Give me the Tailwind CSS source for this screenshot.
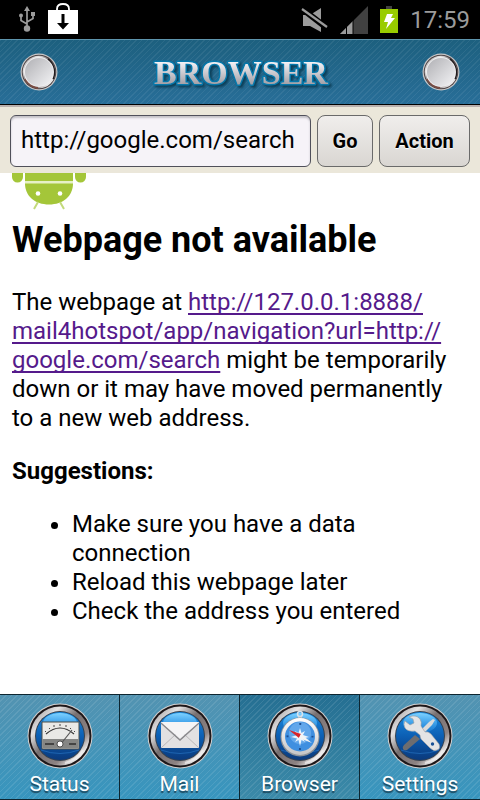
<!DOCTYPE html>
<html lang="en">
<head>
  <meta charset="UTF-8" />
  <meta name="viewport" content="width=device-width, initial-scale=1.0"/>
  <title>Browser</title>
  <script src="https://cdn.jsdelivr.net/npm/@tailwindcss/browser@4"></script>
</head>
<body class="bg-white text-black font-[Roboto,sans-serif]">
  <!-- shared gradients and the glossy tab disc -->
  <svg class="absolute" width="0" height="0" aria-hidden="true">
    <defs>
      <linearGradient id="rim" x1="0" y1="0" x2="1" y2="1">
        <stop offset="0" stop-color="#8a8688"/><stop offset=".25" stop-color="#e4e2e2"/>
        <stop offset=".45" stop-color="#777071"/><stop offset=".7" stop-color="#8d8383"/>
        <stop offset=".84" stop-color="#efeded"/><stop offset="1" stop-color="#6b6264"/>
      </linearGradient>
      <linearGradient id="disc" x1="0" y1="0" x2="0" y2="1">
        <stop offset="0" stop-color="#1a8be0"/><stop offset=".5" stop-color="#0c5fb4"/>
        <stop offset=".8" stop-color="#0a4791"/><stop offset="1" stop-color="#0b3a7c"/>
      </linearGradient>
      <linearGradient id="gloss" x1="0" y1="0" x2="0" y2="1">
        <stop offset="0" stop-color="#7fd2ff"/><stop offset="1" stop-color="#2f9bf0" stop-opacity=".3"/>
      </linearGradient>
      <linearGradient id="knob" x1="0" y1="0" x2="1" y2="1">
        <stop offset="0" stop-color="#b0b0b4"/><stop offset="1" stop-color="#f4f4f6"/>
      </linearGradient>
      <linearGradient id="metal" x1="0" y1="0" x2="0" y2="1">
        <stop offset="0" stop-color="#ffffff"/><stop offset="1" stop-color="#c4c4c6"/>
      </linearGradient>
      <linearGradient id="letters" x1="0" y1="0" x2="0" y2="1">
        <stop offset="0.2" stop-color="#f6f4f8"/><stop offset="0.9" stop-color="#98959c"/>
      </linearGradient>
      <symbol id="badge" viewBox="0 0 66 66">
        <circle cx="33" cy="33" r="32.5" fill="#d2d0d0"/>
        <circle cx="33" cy="33" r="31.5" fill="#1d1719"/>
        <circle cx="33" cy="33" r="29.5" fill="url(#rim)"/>
        <circle cx="33" cy="33" r="25" fill="#35414f"/>
        <circle cx="33" cy="33" r="24" fill="url(#disc)"/>
        <ellipse cx="33" cy="20" rx="17" ry="10" fill="url(#gloss)"/>
        <path d="M14 47Q33 54 52 47" fill="none" stroke="#2a79c9" stroke-width="1" opacity=".6"/>
        <path d="M38 60Q50 57 56 47" fill="none" stroke="#f7f5f5" stroke-width="2" opacity=".6"/>
      </symbol>
      <symbol id="round" viewBox="0 0 38 38">
        <circle cx="19" cy="19" r="18.5" fill="#c9c8c9"/>
        <circle cx="19" cy="19" r="17.3" fill="#4a4143"/>
        <circle cx="19" cy="19" r="16.3" fill="url(#rim)"/>
        <path d="M28 6Q37 15 33 26" fill="none" stroke="#221c1e" stroke-width="2"/>
        <path d="M5 26Q10 34 18 35" fill="none" stroke="#7b4c42" stroke-width="2"/>
        <circle cx="19" cy="19" r="15" fill="#eeeef0"/>
        <circle cx="19" cy="19" r="14" fill="url(#knob)"/>
      </symbol>
    </defs>
  </svg>

  <div class="flex flex-col min-h-screen">
    <!-- Status bar -->
    <div class="h-[39px] bg-black flex items-center justify-between pl-[18px] pr-[10px] text-[#9b9b9b]">
      <div class="flex items-start gap-3">
        <svg class="w-[18px] h-[26px] mt-1" viewBox="0 0 18 26" fill="none" stroke="#9b9b9b" stroke-width="1.7">
          <path d="M9 22V3M9 18L3 14.5V10M9 16L15 12.5V8"/>
          <path d="M9 0L12 5H6Z" fill="#9b9b9b" stroke="none"/>
          <circle cx="9" cy="22.5" r="3.2" fill="#9b9b9b" stroke="none"/>
          <circle cx="3" cy="9.5" r="2" fill="#9b9b9b" stroke="none"/>
          <path d="M13 6H17V10H13Z" fill="#9b9b9b" stroke="none"/>
        </svg>
        <svg class="w-[30px] h-[36px]" viewBox="0 0 30 36">
          <path d="M9 9V7Q9 2 15 2T21 7V9" fill="none" stroke="#fff" stroke-width="1.8"/>
          <path d="M0 8H30V32H0Z" fill="#fff"/>
          <path d="M13.5 12H16.5V21H21L15 27.5L9 21H13.5Z" fill="#000"/>
        </svg>
      </div>
      <div class="flex items-center">
        <svg class="w-[27px] h-[26px]" viewBox="0 0 27 26">
          <path d="M2 8H9L20 1V25L9 19H2Z" fill="#9b9b9b"/>
          <path d="M0 1L26 21" stroke="#000" stroke-width="6"/>
          <path d="M1 2L26 20" stroke="#9b9b9b" stroke-width="2.2"/>
        </svg>
        <svg class="w-[28px] h-[28px] ml-3" viewBox="0 0 28 28">
          <path d="M0 28L28 0V28Z" fill="#414141"/>
          <path d="M0 28L13 15V28Z" fill="#9b9b9b"/>
          <path d="M6.5 18V28M13 12V28" stroke="#000" stroke-width="1"/>
        </svg>
        <svg class="w-[18px] h-[27px] ml-3" viewBox="0 0 18 27">
          <path d="M6 0H12V3H6Z" fill="#414141"/>
          <path d="M0 3H18V27H0Z" fill="#99cc00"/>
          <path d="M7 8H13L11 12H15L6 23L8 16H4Z" fill="#fff"/>
        </svg>
        <span class="text-2xl ml-3">17:59</span>
      </div>
    </div>

    <!-- Title bar -->
    <header class="h-[66px] flex items-center justify-between px-5 border-t border-t-[#5d94ad] border-b border-b-black bg-[repeating-linear-gradient(135deg,#ffffff10_0px,#ffffff10_1px,transparent_1px,transparent_4px),linear-gradient(#1d607f,#286e98)]">
      <button aria-label="Back"><svg class="w-[38px] h-[38px]"><use href="#round"/></svg></button>
      <h1>
        <svg class="w-[184px] h-[44px] drop-shadow-[2px_2px_1px_#0d3f58]" viewBox="0 0 184 44" font-family="Liberation Serif, serif" font-weight="700" font-size="34" text-anchor="middle" stroke-linejoin="round">
          <text x="93" y="34" fill="url(#letters)" stroke="#0678ab" stroke-width="3" paint-order="stroke">BROWSER</text>
        </svg>
      </h1>
      <button aria-label="Menu"><svg class="w-[38px] h-[38px]"><use href="#round"/></svg></button>
    </header>

    <!-- Address form -->
    <form class="h-[68px] flex items-center gap-[6px] px-[10px] pt-px bg-[#ebe7da] border-t-2 border-t-[#b9b0ad]">
      <input type="text" aria-label="Address" value="http://google.com/search" class="min-w-0 flex-1 h-[52px] px-[10px] pb-[2px] rounded-md border border-[#50505a] bg-[#f6f3f8] text-2xl shadow-[inset_0_2px_2px_#c4c2c8]"/>
      <button type="button" class="w-14 h-[52px] rounded-lg border border-[#6a6a6a] bg-linear-to-b from-[#f0eeec] to-[#d9d6d2] text-xl font-bold text-shadow-[0_1px_1px_#ffffff]">Go</button>
      <button type="button" class="w-[91px] h-[52px] rounded-lg border border-[#6a6a6a] bg-linear-to-b from-[#f0eeec] to-[#d9d6d2] text-xl font-bold text-shadow-[0_1px_1px_#ffffff]">Action</button>
    </form>

    <main class="flex-1 px-3">
      <svg class="w-[75px] h-[37px]" viewBox="0 0 75 37" fill="#a4c639">
        <path d="M0 0H11V4A5.5 5.5 0 0 1 0 4ZM63 0H74V4A5.5 5.5 0 0 1 63 4Z"/>
        <path d="M13 0H61V8H13Z"/>
        <path d="M13 8H61V11H13Z" fill="#e6f0c6"/>
        <path d="M13 10.5H61C61 23 51 31.5 37 31.5S13 23 13 10.5Z"/>
        <path d="M26 29L22 36M48 29L52 36" stroke="#c3da7c" stroke-width="2"/>
        <circle cx="26" cy="20.5" r="2.3" fill="#fff"/>
        <circle cx="48" cy="20.5" r="2.3" fill="#fff"/>
      </svg>
      <h2 class="mt-[10px] text-4xl font-bold">Webpage not available</h2>
      <p class="mt-7 text-2xl leading-[29px]">The webpage at <a href="#" class="text-[#551a8b] underline decoration-2 underline-offset-[3px] [text-decoration-skip-ink:none]">http://127.0.0.1:8888/<wbr>mail4hotspot/app/navigation?url=http://<wbr>google.com/search</a> might be temporarily down or it may have moved permanently to a new web address.</p>
      <p class="mt-6 text-2xl leading-[29px] font-bold">Suggestions:</p>
      <ul class="mt-6 pl-[60px] list-disc text-2xl leading-[29px]">
        <li>Make sure you have a data connection</li>
        <li>Reload this webpage later</li>
        <li>Check the address you entered</li>
      </ul>
    </main>

    <!-- Tabs -->
    <nav class="h-[106px] grid grid-cols-4 border-y border-[#0d2530] text-white text-[21px] leading-[30px] text-shadow-[0_2px_1px_#1d4a60]">
      <a href="#" class="flex flex-col items-center pt-2 border-r border-[#0d2530] bg-[repeating-linear-gradient(135deg,#ffffff18_0px,#ffffff18_1px,transparent_1px,transparent_4px),linear-gradient(#5393b1,#3795be)]">
        <svg class="w-[66px] h-[66px]" viewBox="0 0 66 66">
          <use href="#badge"/>
          <path d="M15 19H52V46H15Z" fill="#e9e9e6" stroke="#4c4f48" stroke-width="1"/>
          <path d="M15.5 36H51.5V45.5H15.5Z" fill="#858684"/>
          <path d="M19 31Q33 19 47 31" fill="none" stroke="#333" stroke-width="1.2"/>
          <path d="M18 28L19 29M22 25L23 26M27 22V24M33 21V23M39 22V24M44 25L43 26M48 28L47 29" stroke="#444" stroke-width="1"/>
          <path d="M33 42L45 27" stroke="#555" stroke-width="1.2"/>
          <path d="M18 41H27M42 41H49" stroke="#444" stroke-width="2"/>
          <circle cx="33" cy="41" r="3" fill="#fff" stroke="#333" stroke-width=".8"/>
        </svg>
        <span>Status</span>
      </a>
      <a href="#" class="flex flex-col items-center pt-2 border-r border-[#0d2530] bg-[repeating-linear-gradient(135deg,#ffffff18_0px,#ffffff18_1px,transparent_1px,transparent_4px),linear-gradient(#5393b1,#3795be)]">
        <svg class="w-[66px] h-[66px]" viewBox="0 0 66 66">
          <use href="#badge"/>
          <path d="M14 19H52V45H14Z" fill="#e2e1e2"/>
          <path d="M14 45L29 31M52 45L37 31" stroke="#b9b7b9" stroke-width="1"/>
          <path d="M14 20L33 37L52 20" fill="none" stroke="#8a898c" stroke-width="1.5"/>
          <path d="M14 19H52L33 35.5Z" fill="#f5f4f5"/>
        </svg>
        <span>Mail</span>
      </a>
      <a href="#" aria-current="page" class="flex flex-col items-center pt-2 border-r border-[#0d2530] bg-[repeating-linear-gradient(135deg,#ffffff18_0px,#ffffff18_1px,transparent_1px,transparent_4px),linear-gradient(#256f92,#3b8aa9)]">
        <svg class="w-[66px] h-[66px]" viewBox="0 0 66 66">
          <use href="#badge"/>
          <circle cx="33" cy="11" r="2.5" fill="none" stroke="#d7e4ee" stroke-width="1.5"/>
          <path d="M31 13H35V16H31Z" fill="#d7dde2"/>
          <circle cx="33" cy="34" r="19.5" fill="#8d9298"/>
          <circle cx="33" cy="33.5" r="18.5" fill="url(#metal)"/>
          <circle cx="33" cy="33.5" r="15" fill="#3f8fe0"/>
          <circle cx="33" cy="30" r="11" fill="#7ab7f2" opacity=".6"/>
          <circle cx="33" cy="33.5" r="12.5" fill="none" stroke="#1b4f93" stroke-width="2" stroke-dasharray="2 17.6" stroke-dashoffset="1"/>
          <path d="M33 25L34.5 30L38 28L36 32L42 34L36 35.5L38 39L34.5 37L33 43L31.5 37L28 39L30 35.5L24 34L30 32L28 28L31.5 30Z" fill="#eaf4fd"/>
          <path d="M22 27L34 31L32 35Z" fill="#d9242a"/>
          <path d="M34 31L45 40L32 35Z" fill="#f4f4f4"/>
        </svg>
        <span>Browser</span>
      </a>
      <a href="#" class="flex flex-col items-center pt-2 bg-[repeating-linear-gradient(135deg,#ffffff18_0px,#ffffff18_1px,transparent_1px,transparent_4px),linear-gradient(#5393b1,#3795be)]">
        <svg class="w-[66px] h-[66px]" viewBox="0 0 66 66">
          <use href="#badge"/>
          <!-- screwdriver -->
          <path d="M46 16L48 17L45 22L34 33L31 30L42 19Z" fill="#dadada"/>
          <path d="M28 32L33 36L20 47Q17 48 16 46T17 42Z" fill="#6d6d70"/>
          <!-- wrench -->
          <path d="M22 14Q29 11 33 16Q35 19 34 23L38 29Q41 28 44 31L52 41Q54 46 50 47Q47 49 43 45L34 36Q33 34 33 32L28 28Q21 29 18 25Q16 21 18 18L23 22L27 20L26 16Z" fill="#e4e4e5" stroke="#9d9da0" stroke-width=".6"/>
          <circle cx="45.5" cy="41" r="1.7" fill="#174f94"/>
        </svg>
        <span>Settings</span>
      </a>
    </nav>
  </div>
</body>
</html>
